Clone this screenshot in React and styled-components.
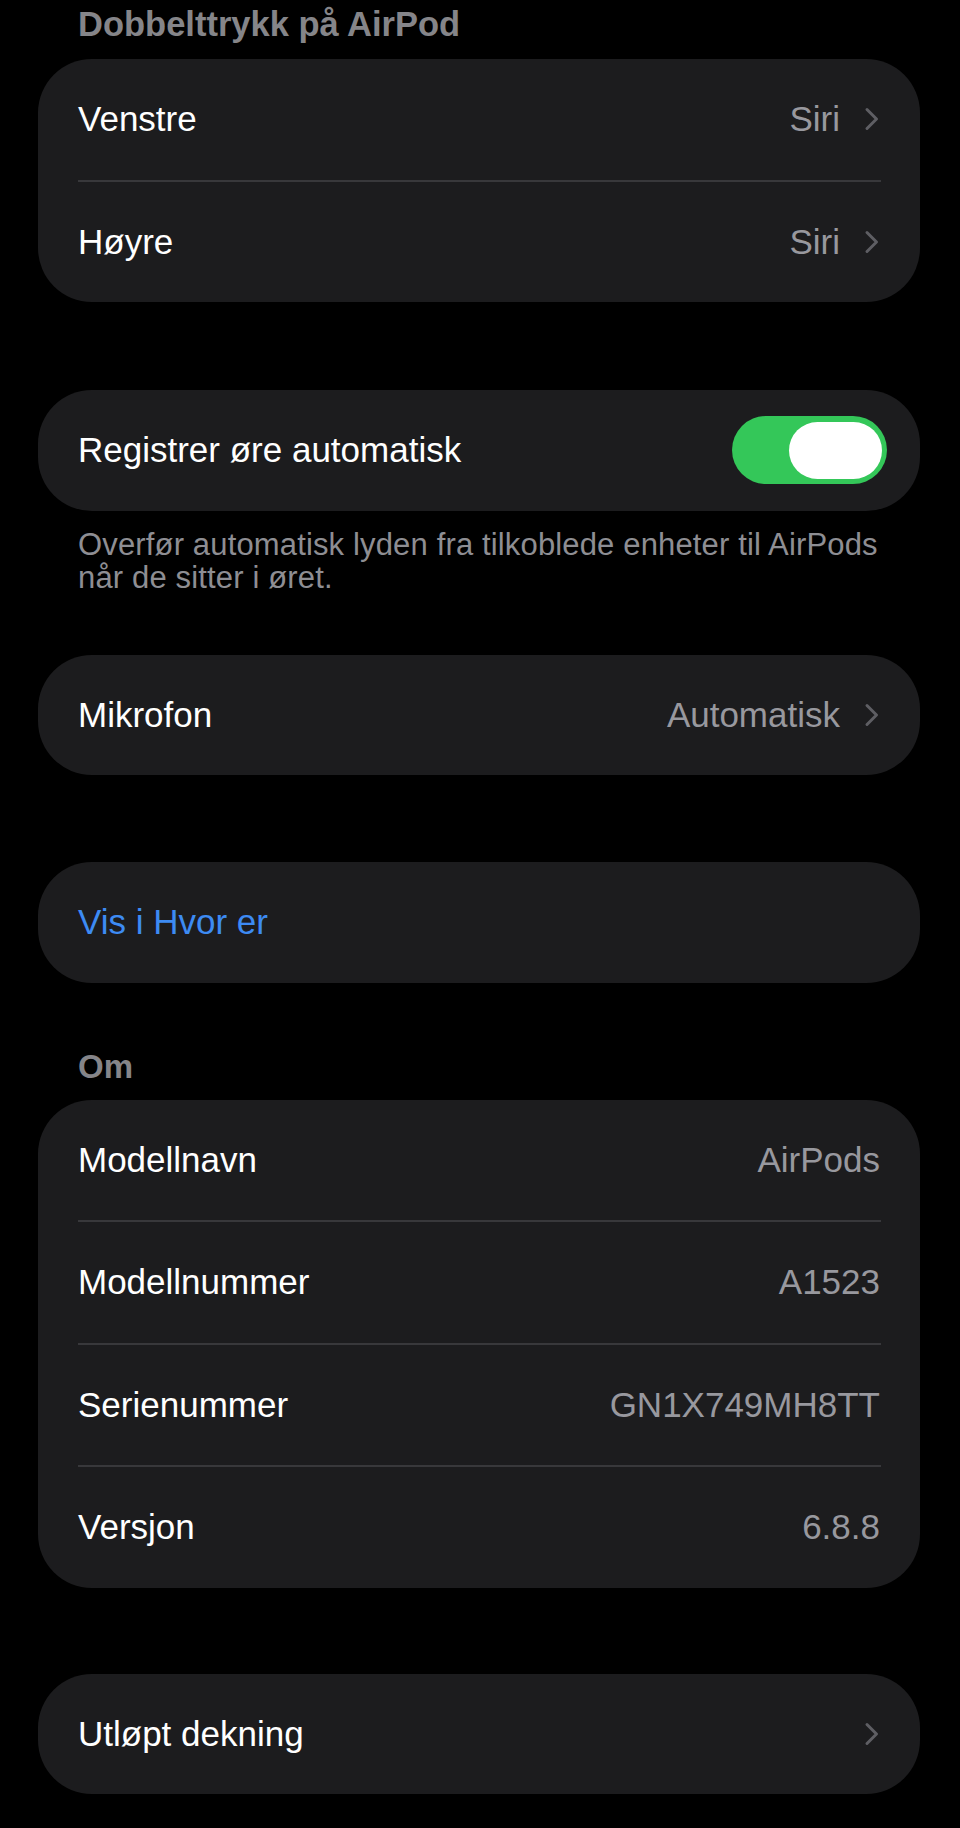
import React from 'react';
import styled, { createGlobalStyle } from 'styled-components';

const GlobalStyle = createGlobalStyle`
  body {
    margin: 0;
    background: #000;
    font-family: "Liberation Sans", Arial, sans-serif;
    -webkit-font-smoothing: antialiased;
  }
`;

const Page = styled.div`
  display: flex;
  flex-direction: column;
  padding: 4px 40px 40px 38px;
`;

const SectionHeader = styled.div`
  margin: ${(p) => p.$top || 0}px 0 ${(p) => p.$bottom ?? 15}px;
  padding-left: 40px;
  font-size: ${(p) => p.$size || 33}px;
  font-weight: 700;
  line-height: 40px;
  color: #858589;
`;

const Card = styled.div`
  margin-top: ${(p) => p.$top || 0}px;
  background: #1c1c1e;
  border-radius: 54px;
  overflow: hidden;
`;

const Row = styled.div`
  display: flex;
  align-items: center;
  justify-content: space-between;
  min-height: 120.5px;
  padding: 0 40px 0 40px;
  box-sizing: border-box;
`;

const Label = styled.span`
  font-size: 35px;
  color: ${(p) => (p.$link ? '#3d8bf3' : '#fff')};
`;

const Right = styled.div`
  display: flex;
  align-items: center;
  gap: 24px;
`;

const Value = styled.span`
  font-size: 35px;
  color: #98989e;
`;

const Divider = styled.div`
  height: 2px;
  margin: 0 39px 0 40px;
  background: #38383b;
`;

const Footer = styled.p`
  margin: 17px 0 0;
  padding: 0 40px;
  font-size: 31px;
  line-height: 33px;
  letter-spacing: 0.15px;
  color: #8e8e93;
`;

const Track = styled.div`
  display: flex;
  justify-content: ${(p) => (p.$on ? 'flex-end' : 'flex-start')};
  align-items: center;
  width: 155px;
  height: 68px;
  margin-right: -7px;
  padding: 0 5px;
  box-sizing: border-box;
  border-radius: 34px;
  background: ${(p) => (p.$on ? '#34c759' : '#39393d')};
`;

const Knob = styled.div`
  width: 93px;
  height: 57px;
  border-radius: 29px;
  background: #fff;
`;

const ChevronSvg = styled.svg`
  width: 16px;
  height: 24px;
  flex-shrink: 0;
`;

const Chevron = () => (
  <ChevronSvg viewBox="0 0 16 24">
    <polyline
      points="3,2.5 12.5,12 3,21.5"
      fill="none"
      stroke="#5e5e63"
      strokeWidth="3"
      strokeLinecap="round"
      strokeLinejoin="round"
    />
  </ChevronSvg>
);

const InfoRow = ({ label, value, nav, link }) => (
  <Row>
    <Label $link={link}>{label}</Label>
    {(value || nav) && (
      <Right>
        {value && <Value>{value}</Value>}
        {nav && <Chevron />}
      </Right>
    )}
  </Row>
);

const about = [
  ['Modellnavn', 'AirPods'],
  ['Modellnummer', 'A1523'],
  ['Serienummer', 'GN1X749MH8TT'],
  ['Versjon', '6.8.8'],
];

const App = () => (
  <Page>
    <GlobalStyle />
    <SectionHeader $size={34.5}>Dobbelttrykk på AirPod</SectionHeader>
    <Card>
      <InfoRow label="Venstre" value="Siri" nav />
      <Divider />
      <InfoRow label="Høyre" value="Siri" nav />
    </Card>

    <Card $top={88}>
      <Row>
        <Label>Registrer øre automatisk</Label>
        <Track $on>
          <Knob />
        </Track>
      </Row>
    </Card>
    <Footer>
      Overfør automatisk lyden fra tilkoblede enheter til AirPods
      <br />
      når de sitter i øret.
    </Footer>

    <Card $top={61}>
      <InfoRow label="Mikrofon" value="Automatisk" nav />
    </Card>

    <Card $top={87}>
      <InfoRow label="Vis i Hvor er" link />
    </Card>

    <SectionHeader $top={64} $bottom={13}>Om</SectionHeader>
    <Card>
      {about.map(([label, value], i) => (
        <React.Fragment key={label}>
          {i > 0 && <Divider />}
          <InfoRow label={label} value={value} />
        </React.Fragment>
      ))}
    </Card>

    <Card $top={86}>
      <InfoRow label="Utløpt dekning" nav />
    </Card>
  </Page>
);

export default App;
